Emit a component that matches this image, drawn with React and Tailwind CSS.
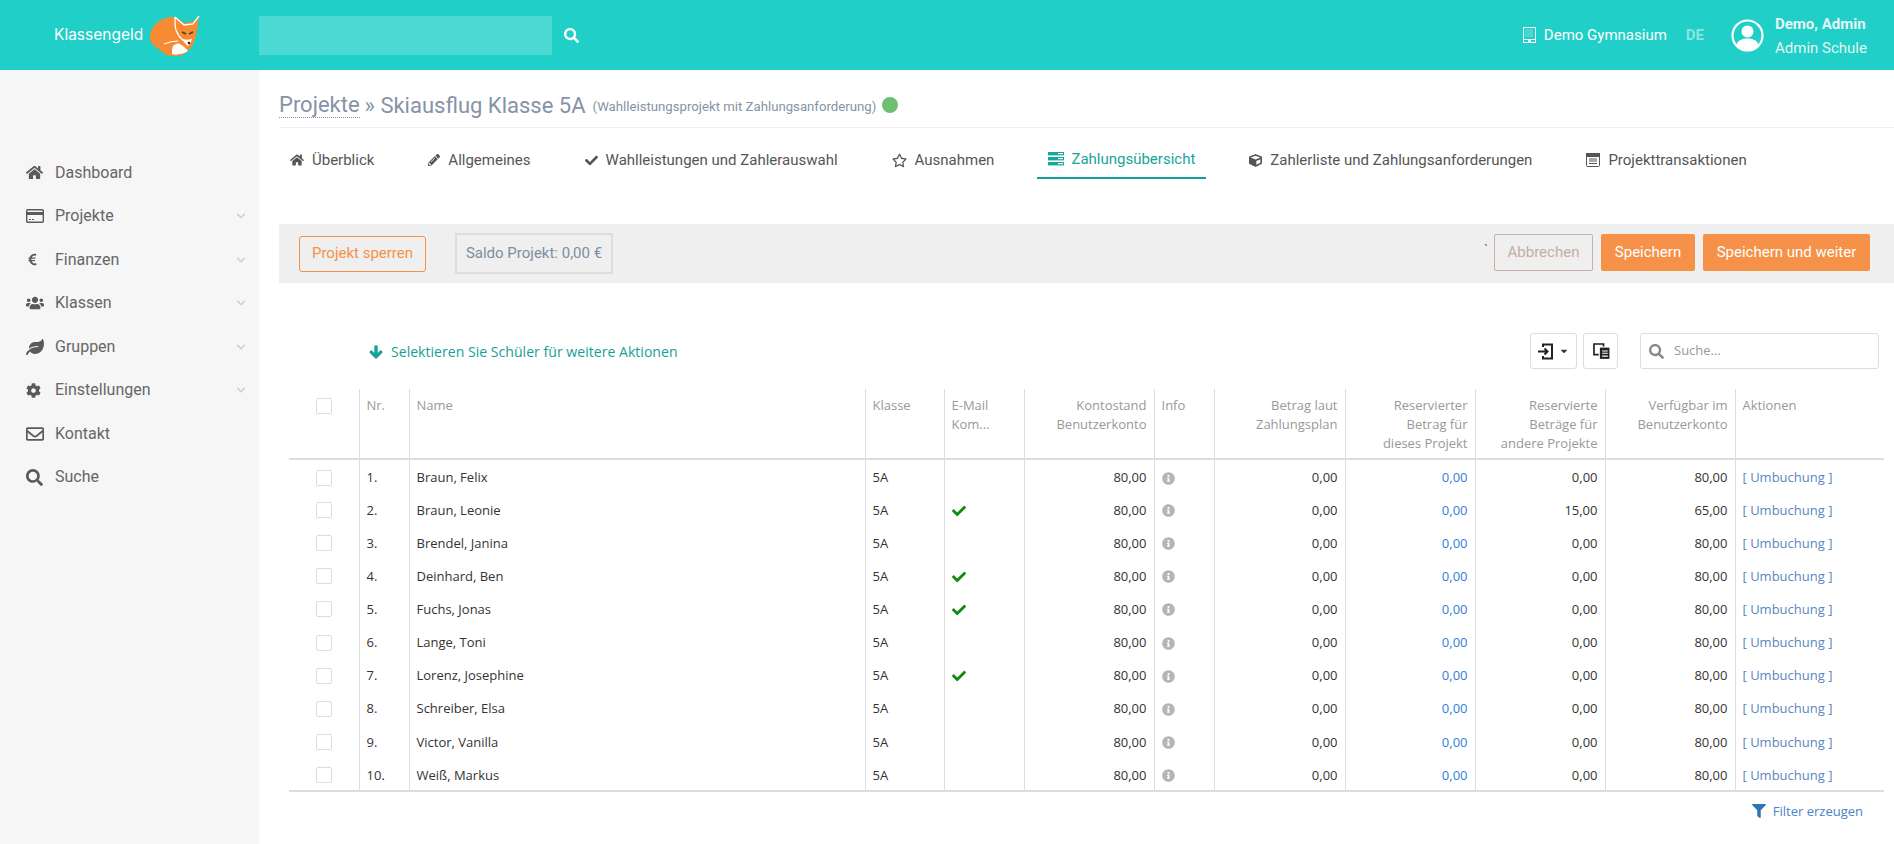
import { FaHome, FaPencilAlt, FaCheck, FaRegStar, FaCube, FaEuroSign, FaUsers, FaLeaf, FaCog, FaRegEnvelope, FaSearch, FaChevronDown, FaFilter, FaInfoCircle, FaArrowDown, FaCaretDown } from 'react-icons/fa'

const students = [
  ['Braun, Felix', false, '0,00', '80,00'],
  ['Braun, Leonie', true, '15,00', '65,00'],
  ['Brendel, Janina', false, '0,00', '80,00'],
  ['Deinhard, Ben', true, '0,00', '80,00'],
  ['Fuchs, Jonas', true, '0,00', '80,00'],
  ['Lange, Toni', false, '0,00', '80,00'],
  ['Lorenz, Josephine', true, '0,00', '80,00'],
  ['Schreiber, Elsa', false, '0,00', '80,00'],
  ['Victor, Vanilla', false, '0,00', '80,00'],
  ['Weiß, Markus', false, '0,00', '80,00'],
]

function CardIcon({ size, className }) {
  return (
    <svg width={size} height={size} viewBox="0 0 18 18" className={className}>
      <rect x="0.7" y="2.700" width="16.600" height="12.600" rx="1" fill="none" stroke="currentColor" strokeWidth="1.400" />
      <rect x="1" y="5" width="16" height="3" fill="currentColor" />
      <path d="M3 12.500h2M6 12.500h2" stroke="currentColor" strokeWidth="1" />
    </svg>
  )
}

const nav = [
  [FaHome, 'Dashboard', false, 17],
  [CardIcon, 'Projekte', true, 18],
  [FaEuroSign, 'Finanzen', true, 13],
  [FaUsers, 'Klassen', true, 18],
  [FaLeaf, 'Gruppen', true, 18],
  [FaCog, 'Einstellungen', true, 15],
  [FaRegEnvelope, 'Kontakt', false, 18],
  [FaSearch, 'Suche', false, 17],
]

function ServerIcon() {
  return (
    <svg width="16" height="14" viewBox="0 0 16 14" fill="#17a59c">
      <rect x="0" y="0" width="16" height="3.400" />
      <rect x="0" y="5" width="16" height="3.400" />
      <rect x="0" y="10" width="16" height="3.400" />
      <rect x="10" y="1" width="5" height="1.200" fill="#fff" />
      <rect x="10" y="6" width="5" height="1.200" fill="#fff" />
      <rect x="10" y="11" width="5" height="1.200" fill="#fff" />
    </svg>
  )
}

function ListIcon() {
  return (
    <svg width="14" height="14" viewBox="0 0 14 14" fill="none" stroke="#555" strokeWidth="1">
      <rect x="0.5" y="0.5" width="13" height="13" rx="1" />
      <rect x="0.5" y="0.5" width="13" height="3" fill="#555" />
      <path d="M3 6h8M3 8h8M3 10.500h8" />
    </svg>
  )
}

const tabs = [
  [<FaHome size={14} />, 'Überblick'],
  [<FaPencilAlt size={12} />, 'Allgemeines'],
  [<FaCheck size={13} />, 'Wahlleistungen und Zahlerauswahl'],
  [<FaRegStar size={15} />, 'Ausnahmen'],
  [<ServerIcon />, 'Zahlungsübersicht', true],
  [<FaCube size={13} />, 'Zahlerliste und Zahlungsanforderungen'],
  [<ListIcon />, 'Projekttransaktionen'],
]

const th = 'font-normal align-top px-[7px] pt-[7px] border-l border-[#dddddd]'
const td = 'px-[7px] pt-[4px] h-[33.100px] border-l border-[#dddddd]'

function Box() {
  return <span className="block w-4 h-4 rounded-[2px] border border-[#dddddd] bg-white" />
}

function Logo() {
  return (
    <svg width="50" height="41" viewBox="0 0 50 41">
      <path d="M25 2 C17 2 12 4 8 7 C3 11 0 16 0 22 C0 27 3 30 6 32 C11 36 16 41 22 41 C26 42 30 41 34 39 C39 36 42 32 44 27 C47 19 48 9 49 1 L43 7 L34 8Z" fill="#f68b33" />
      <path d="M25 2 C25 8 25 12 26 15 C28 20 30 23 33 25 L38 30 M25 2 L34 10 L43 9 L49 1" fill="none" stroke="#fff" strokeWidth="1.300" />
      <path d="M14 29 C19 27 24 26 28 26" fill="none" stroke="#fff" strokeWidth="1.200" />
      <path d="M23 31 C25 29 28 28 30 29 C33 31 36 33 38 36 C35 38 32 39 29 39 C27 40 24 40 22 39 C22 36 22 33 23 31Z" fill="#fff" />
      <path d="M33 24 C35 25 38 25 42 24 C41 27 40 29 38 31 C36 29 34 27 33 24Z" fill="#fff" />
      <path d="M32 17l4 2M43 17l-4 2" stroke="#5a3a22" strokeWidth="1.400" />
      <circle cx="39" cy="28" r="1.300" fill="#222" />
    </svg>
  )
}

function BuildingIcon() {
  return (
    <svg width="13" height="16" viewBox="0 0 13 16" fill="none" stroke="#fff">
      <rect x="0.5" y="0.5" width="12" height="15" strokeWidth="1" />
      <path d="M2.500 3h8M2.500 5h8M2.500 7h8M2.500 9h8" strokeWidth="1" strokeDasharray="1 1" opacity="0.8" />
      <path d="M1 12.500h11" strokeWidth="1" />
      <rect x="5" y="12.500" width="3" height="3" fill="#fff" stroke="none" />
    </svg>
  )
}

function UserIcon() {
  return (
    <svg width="33" height="33" viewBox="0 0 33 33">
      <circle cx="16.500" cy="16.500" r="15" fill="none" stroke="#fff" strokeWidth="2.200" />
      <circle cx="16.500" cy="12.500" r="6" fill="#fff" />
      <path d="M5.500 26.500 C6 21 11 20.500 14 19.500 L19 19.500 C22 20.500 27 21 27.500 26.500 C24 30.500 20 31.500 16.500 31.500 C13 31.500 9 30.500 5.500 26.500Z" fill="#fff" />
    </svg>
  )
}

function EnterIcon() {
  return (
    <svg width="16" height="17" viewBox="0 0 16 17" fill="none" stroke="#222" strokeWidth="2">
      <path d="M5 4V1.500h9v14H5V13" />
      <path d="M0 8.500h9M6.500 5.500l3 3-3 3" />
    </svg>
  )
}

function ColumnsIcon() {
  return (
    <svg width="18" height="18" viewBox="0 0 16 16" fill="#222">
      <path d="M1 1h10v3H9.500V2.500h-7v8H6V12H1z" />
      <rect x="7" y="5" width="8.500" height="10" />
      <path d="M9 8h5M9 10h5M9 12.500h5" stroke="#fff" strokeWidth="1" />
    </svg>
  )
}

export default function App() {
  return (
    <div className="min-h-screen bg-white font-['Roboto',sans-serif] text-[#555555]">
      <header className="h-[70px] bg-[#1fcfc8] flex items-center">
        <div className="w-[259px] flex items-center pl-[54px] gap-[7px]">
          <span className="text-white text-[15.500px] font-['Inter',sans-serif]">Klassengeld</span>
          <Logo />
        </div>
        <div className="w-[293px] h-[39px] bg-[#4cd9d4]" />
        <FaSearch className="text-white ml-[12px]" size={15} />
        <div className="ml-auto flex items-center text-white">
          <BuildingIcon />
          <span className="ml-[8px] text-[15px]">Demo Gymnasium</span>
          <span className="ml-[19px] mr-[27px] text-[15px] font-bold text-[#8ce5e1]">DE</span>
          <UserIcon />
          <div className="ml-[11px] mr-[28px] w-[91px] pt-[2px] text-[#e6f5f4]">
            <div className="text-[15px] font-bold leading-[24px] whitespace-nowrap">Demo, Admin</div>
            <div className="text-[15px] leading-[24px] whitespace-nowrap">Admin Schule</div>
          </div>
        </div>
      </header>

      <div className="flex">
        <aside className="w-[259px] shrink-0 bg-[#f6f6f6] min-h-[774px] pt-[81px]">
          {nav.map(([Icon, label, sub, size]) => (
            <div key={label} className="h-[43.500px] flex items-center pl-[26px] pr-[13px] text-[16px] text-[#666666]">
              <span className="w-[29px] shrink-0"><Icon size={size} className="text-[#5a5a5a]" /></span>
              <span>{label}</span>
              {sub && <FaChevronDown size={10} className="ml-auto text-[#cdd3da]" />}
            </div>
          ))}
        </aside>

        <main className="flex-1 min-w-0 pl-[20px]">
          <div className="h-[58px] border-b border-[#eeeeee] flex items-center pt-[13px] text-[#8593a6]">
            <span className="text-[22px] border-b border-dotted border-[#8593a6] leading-[24px]">Projekte</span>
            <span className="text-[22px] ml-[5px]">» Skiausflug Klasse 5A</span>
            <span className="text-[13.200px] ml-[7px] mt-[3px]">(Wahlleistungsprojekt mit Zahlungsanforderung)</span>
            <span className="w-[16px] h-[16px] rounded-full bg-[#6cc070] ml-[6px]" />
          </div>

          <div className="flex gap-[32px] mt-[15px] h-[36px]">
            {tabs.map(([icon, label, active]) => (
              <div key={label} className={active
                ? 'flex items-center gap-[7px] px-[11px] pb-[2px] h-full text-[15px] text-[#17a59c] border-b-2 border-[#17a098] whitespace-nowrap'
                : 'flex items-center gap-[8px] px-[11px] pb-[2px] h-full text-[15px] text-[#555555] whitespace-nowrap'}>
                {icon}
                <span>{label}</span>
              </div>
            ))}
          </div>

          <div className="mt-[45px] h-[59px] bg-[#efefef] flex items-center pl-[20px] pr-[20px]">
            <button className="w-[127px] h-[36px] border border-[#f6914a] rounded-[3px] text-[15px] text-[#f6914a]">Projekt sperren</button>
            <div className="ml-[29px] w-[158px] h-[41px] border-2 border-[#dddddd] flex items-center justify-center text-[15px] text-[#7d8ea3]">Saldo Projekt: 0,00 €</div>
            <span className="ml-auto mr-[6px] -mt-[8px] text-[12px] leading-none">`</span>
            <div className="flex gap-[8px] -mt-[2px] mr-[4px]">
              <button className="w-[99px] h-[37px] border border-[#c9b0a5] rounded-[2px] text-[15px] text-[#c4aea4]">Abbrechen</button>
              <button className="w-[94px] h-[37px] bg-[#f6914a] rounded-[2px] text-[15px] text-white">Speichern</button>
              <button className="w-[167px] h-[37px] bg-[#f6914a] rounded-[2px] text-[15px] text-white">Speichern und weiter</button>
            </div>
          </div>

          <div className="font-['Open_Sans',sans-serif]">
            <div className="mt-[50px] h-[36px] flex items-center pr-[15px]">
              <FaArrowDown size={14} stroke="currentColor" strokeWidth={40} className="ml-[90px] mt-[2px] text-[#17a098]" />
              <span className="ml-[8px] mt-[2px] text-[14.100px] text-[#17a098]">Selektieren Sie Schüler für weitere Aktionen</span>
              <div className="ml-auto flex items-center gap-[6px]">
                <button className="w-[47px] h-[36px] border border-[#dddddd] rounded-[3px] flex items-center justify-center gap-[5px]">
                  <EnterIcon />
                  <FaCaretDown size={10} className="text-[#333333]" />
                </button>
                <button className="w-[35px] h-[36px] border border-[#dddddd] rounded-[3px] flex items-center justify-center"><ColumnsIcon /></button>
              </div>
              <div className="ml-[22px] w-[239px] h-[36px] border border-[#dddddd] rounded-[3px] flex items-center pl-[8px] gap-[10px] text-[13px] text-[#999999]">
                <FaSearch size={15} className="text-[#888888]" />
                <span>Suche...</span>
              </div>
            </div>

            <div className="mt-[20px] ml-[10px] mr-[10px]">
              <table className="w-full table-fixed border-collapse text-[13px] text-[#333333]">
                <colgroup>
                  <col className="w-[70px]" />
                  <col className="w-[50px]" />
                  <col />
                  <col className="w-[79px]" />
                  <col className="w-[80px]" />
                  <col className="w-[130px]" />
                  <col className="w-[60px]" />
                  <col className="w-[131px]" />
                  <col className="w-[130px]" />
                  <col className="w-[130px]" />
                  <col className="w-[130px]" />
                  <col className="w-[149px]" />
                </colgroup>
                <thead>
                  <tr className="h-[70px] border-b-2 border-[#dddddd] text-[#999999] leading-[19px]">
                    <th className="font-normal align-top pt-[9px] pl-[27px]"><Box /></th>
                    <th className={th + ' text-left'}>Nr.</th>
                    <th className={th + ' text-left'}>Name</th>
                    <th className={th + ' text-left'}>Klasse</th>
                    <th className={th + ' text-left'}>E-Mail<br />Kom...</th>
                    <th className={th + ' text-right'}>Kontostand<br />Benutzerkonto</th>
                    <th className={th + ' text-left'}>Info</th>
                    <th className={th + ' text-right'}>Betrag laut<br />Zahlungsplan</th>
                    <th className={th + ' text-right'}>Reservierter<br />Betrag für<br />dieses Projekt</th>
                    <th className={th + ' text-right'}>Reservierte<br />Beträge für<br />andere Projekte</th>
                    <th className={th + ' text-right'}>Verfügbar im<br />Benutzerkonto</th>
                    <th className={th + ' text-left'}>Aktionen</th>
                  </tr>
                </thead>
                <tbody>
                  {students.map(([name, mail, other, free], i) => (
                    <tr key={name}>
                      <td className="pl-[27px] pt-[3px]"><Box /></td>
                      <td className={td}>{i + 1}.</td>
                      <td className={td}>{name}</td>
                      <td className={td}>5A</td>
                      <td className={td}>{mail && <FaCheck size={14} className="text-[#0f8a0f]" />}</td>
                      <td className={td + ' text-right'}>80,00</td>
                      <td className={td}><FaInfoCircle size={13} className="text-[#b5b5b5]" /></td>
                      <td className={td + ' text-right'}>0,00</td>
                      <td className={td + ' text-right text-[#2f7fd8]'}>0,00</td>
                      <td className={td + ' text-right'}>{other}</td>
                      <td className={td + ' text-right'}>{free}</td>
                      <td className={td + ' text-[#5a87bd]'}>[ Umbuchung ]</td>
                    </tr>
                  ))}
                </tbody>
              </table>
              <div className="border-t-2 border-[#dddddd] flex justify-end items-center h-[41px] pr-[21px] gap-[7px] text-[13px] text-[#4a85c5]">
                <FaFilter size={14} className="text-[#2f75b5]" />
                <span>Filter erzeugen</span>
              </div>
            </div>
          </div>
        </main>
      </div>
    </div>
  )
}
